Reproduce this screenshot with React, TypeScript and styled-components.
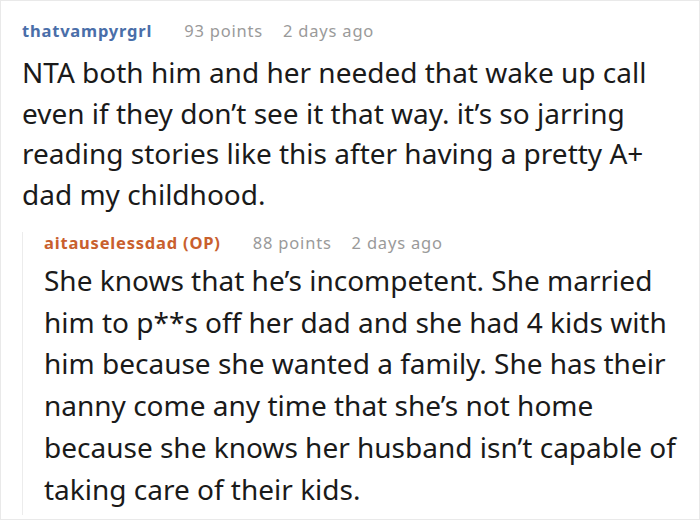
import React from "react";
import styled, { createGlobalStyle } from "styled-components";

const Global = createGlobalStyle`
  html, body { margin: 0; padding: 0; background: #fff; }
  * { box-sizing: border-box; }
`;

const Frame = styled.div`
  width: 700px;
  height: 520px;
  border: 1px solid #e9e9e9;
  padding: 19px 14px 0 21px;
  font-family: "Noto Sans", "Open Sans", sans-serif;
  overflow: hidden;
  background: #fff;
`;

const Comment = styled.div<{ $reply?: boolean }>`
  display: flex;
  flex-direction: column;
  ${(p) =>
    p.$reply
      ? `margin-top: 17px; border-left: 1px solid #ececec; padding-left: 21px; padding-bottom: 4px;`
      : ``}
`;

const Meta = styled.div`
  display: flex;
  align-items: baseline;
  font-size: 16.5px;
  line-height: 22px;
  letter-spacing: 0.8px;
  color: #9a9a9a;
`;

const Author = styled.span<{ $op?: boolean }>`
  font-weight: 700;
  color: ${(p) => (p.$op ? "#c9602d" : "#4a6ea9")};
  margin-right: 32px;
`;

const Points = styled.span`
  margin-right: 20px;
`;

const Body = styled.p<{ $gap: number; $lh: number }>`
  margin: ${(p) => p.$gap}px 0 0;
  font-size: 28px;
  line-height: ${(p) => p.$lh}px;
  color: #1a1a1a;
`;

export default function App() {
  return (
    <>
      <Global />
      <Frame>
        <Comment>
          <Meta>
            <Author>thatvampyrgrl</Author>
            <Points>93 points</Points>
            <span>2 days ago</span>
          </Meta>
          <Body $gap={10} $lh={40.7}>
            NTA both him and her needed that wake up call even if they don’t see it that way. it’s so jarring
            reading stories like this after having a pretty A+ dad my childhood.
          </Body>
        </Comment>
        <Comment $reply>
          <Meta>
            <Author $op>aitauselessdad (OP)</Author>
            <Points>88 points</Points>
            <span>2 days ago</span>
          </Meta>
          <Body $gap={6} $lh={41.8}>
            She knows that he’s incompetent. She married him to p**s off her dad and she had 4 kids with him
            because she wanted a family. She has their nanny come any time that she’s not home because she
            knows her husband isn’t capable of taking care of their kids.
          </Body>
        </Comment>
      </Frame>
    </>
  );
}
